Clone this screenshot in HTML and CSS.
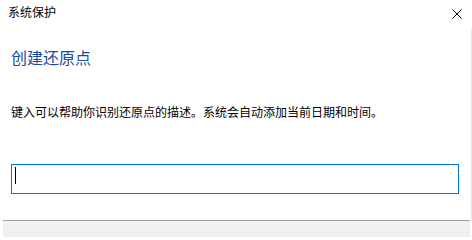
FILE: index.html
```html
<!DOCTYPE html>
<html lang="zh-CN">
<head>
<meta charset="utf-8">
<title>系统保护</title>
<link rel="stylesheet" href="styles.css">
</head>
<body>
<div class="window">
  <div class="titlebar">
    <span class="title">系统保护</span>
    <svg class="close" width="10" height="10" viewBox="0 0 10 10" aria-hidden="true">
      <path d="M0.5 0.5 L9.5 9.5 M9.5 0.5 L0.5 9.5" stroke="#000" stroke-width="1" fill="none"/>
    </svg>
  </div>
  <div class="content">
    <div class="heading">创建还原点</div>
    <div class="desc">键入可以帮助你识别还原点的描述。系统会自动添加当前日期和时间。</div>
    <div class="field"><span class="caret"></span></div>
  </div>
  <div class="footer"></div>
</div>
</body>
</html>
```
FILE: styles.css
```css
html, body {
  margin: 0;
  padding: 0;
  background: #ffffff;
}
body {
  font-family: "Noto Sans CJK SC", "Noto Sans", sans-serif;
  color: #000;
  width: 472px;
  height: 237px;
  overflow: hidden;
}
.window {
  display: flex;
  flex-direction: column;
  height: 237px;
}
.titlebar {
  height: 28px;
  display: flex;
  align-items: flex-start;
  justify-content: space-between;
  padding: 0 10px 0 8px;
  box-sizing: border-box;
}
.title {
  font-size: 12px;
  line-height: 12px;
  margin-top: 6px;
}
.close {
  margin-top: 9px;
  display: block;
}
.content {
  flex: 1;
  padding-left: 11px;
  border-right: 1px solid #e6e6e6;
}
.heading {
  font-size: 16px;
  line-height: 16px;
  color: #1a4ca3;
  margin-top: 21px;
}
.desc {
  font-size: 12px;
  line-height: 12px;
  margin-top: 41px;
}
.field {
  margin-top: 46px;
  width: 448px;
  height: 30px;
  box-sizing: border-box;
  border: 1px solid #0078d7;
  display: flex;
  padding: 2px 0 0 3px;
}
.caret {
  display: block;
  width: 1px;
  height: 17px;
  background: #000;
}
.footer {
  height: 16px;
  margin: 0 2px 0 3px;
  background: #f0f0f0;
  border-top: 1px solid #a0a0a0;
}
```
